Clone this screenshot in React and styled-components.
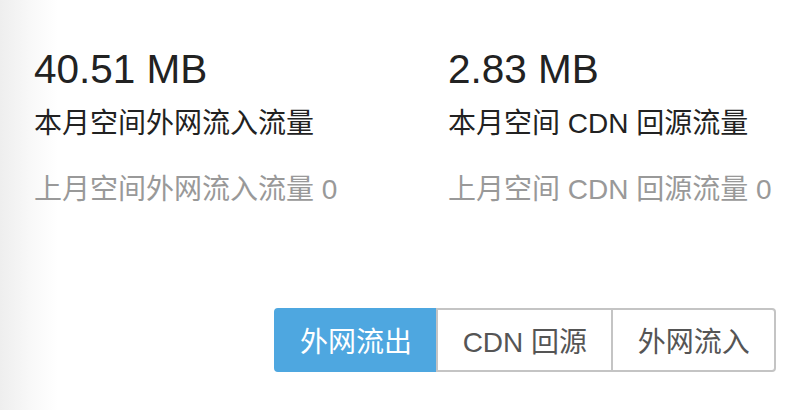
import React, { useState } from 'react';
import styled, { createGlobalStyle } from 'styled-components';

const GlobalStyle = createGlobalStyle`
  html, body {
    margin: 0;
    padding: 0;
    background: #fff;
  }
  body {
    font-family: "Liberation Sans", "Noto Sans CJK SC", sans-serif;
  }
`;

const Page = styled.div`
  width: 808px;
  height: 410px;
  box-sizing: border-box;
  padding: 45px 32px 0 34px;
  background: linear-gradient(to right, #eeeeee 0, #f8f8f8 30px, #ffffff 58px);
  display: flex;
  flex-direction: column;
`;

const Stats = styled.div`
  display: grid;
  grid-template-columns: 414px 1fr;
`;

const Stat = styled.div`
  display: flex;
  flex-direction: column;
`;

const Value = styled.div`
  font-size: 40.5px;
  line-height: 48px;
  color: #222;
`;

const Label = styled.div`
  margin-top: 11px;
  font-size: 28px;
  line-height: 40px;
  color: #222;
`;

const Previous = styled.div`
  margin-top: 26px;
  font-size: 28px;
  line-height: 40px;
  color: #999;
`;

const Switcher = styled.div`
  margin-top: 98px;
  align-self: flex-end;
  display: flex;
`;

const Tab = styled.button`
  height: 64px;
  padding: 0 24.3px;
  font-family: inherit;
  font-size: 28px;
  border: 2px solid ${p => (p.$active ? '#4ea7e0' : '#c4c4c4')};
  background: ${p => (p.$active ? '#4ea7e0' : '#fff')};
  color: ${p => (p.$active ? '#fff' : '#555')};
  cursor: pointer;
  & + & {
    margin-left: -2px;
  }
  &:first-child {
    border-radius: 4px 0 0 4px;
  }
  &:last-child {
    border-radius: 0 4px 4px 0;
  }
`;

const stats = [
  { value: '40.51 MB', label: '本月空间外网流入流量', prev: '上月空间外网流入流量 0' },
  { value: '2.83 MB', label: '本月空间 CDN 回源流量', prev: '上月空间 CDN 回源流量 0' },
];

const tabs = ['外网流出', 'CDN 回源', '外网流入'];

export default function App() {
  const [active, setActive] = useState(0);

  return (
    <>
      <GlobalStyle />
      <Page>
        <Stats>
          {stats.map(s => (
            <Stat key={s.label}>
              <Value>{s.value}</Value>
              <Label>{s.label}</Label>
              <Previous>{s.prev}</Previous>
            </Stat>
          ))}
        </Stats>
        <Switcher>
          {tabs.map((t, i) => (
            <Tab key={t} $active={i === active} onClick={() => setActive(i)}>
              {t}
            </Tab>
          ))}
        </Switcher>
      </Page>
    </>
  );
}
